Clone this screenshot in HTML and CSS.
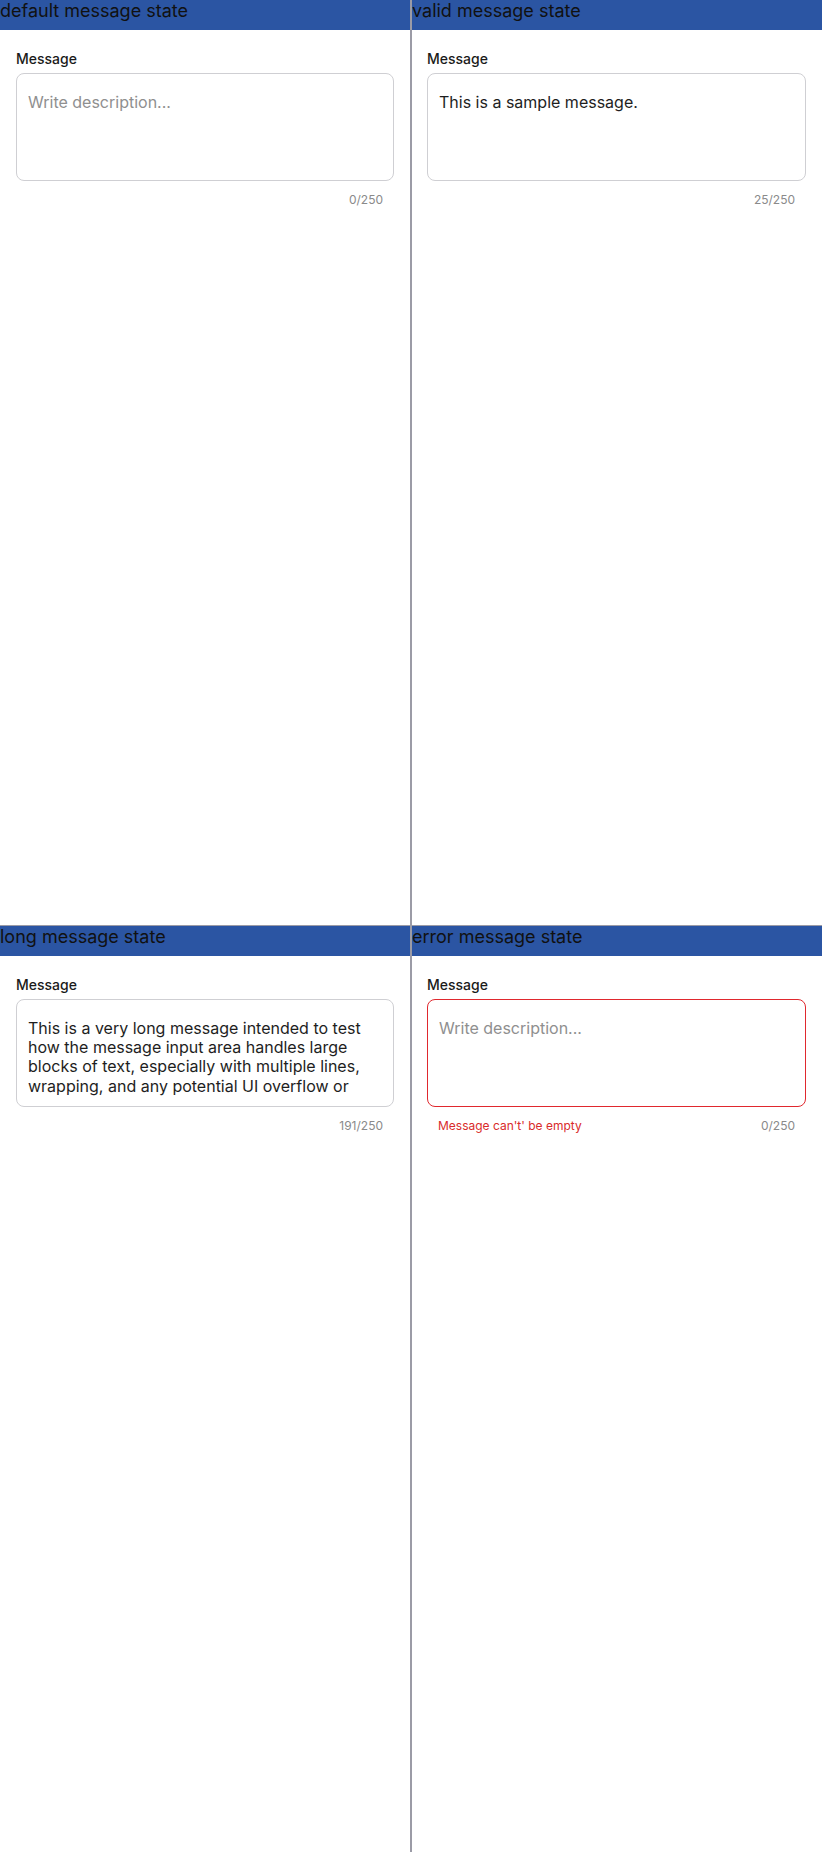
FILE: index.html
```html
<!DOCTYPE html>
<html lang="en">
<head>
<meta charset="utf-8">
<title>Message field states</title>
<link rel="stylesheet" href="styles.css">
</head>
<body>
<main class="grid">
  <section class="cell cell-left cell-top">
    <div class="cell-title">default message state</div>
    <div class="cell-body">
      <div class="field">
        <label class="field-label" for="m1">Message</label>
        <div class="field-box">
          <textarea id="m1" class="field-input" placeholder="Write description..."></textarea>
        </div>
        <div class="field-meta">
          <span class="field-count">0/250</span>
        </div>
      </div>
    </div>
  </section>

  <section class="cell cell-right cell-top">
    <div class="cell-title">valid message state</div>
    <div class="cell-body">
      <div class="field">
        <label class="field-label" for="m2">Message</label>
        <div class="field-box">
          <textarea id="m2" class="field-input" placeholder="Write description...">This is a sample message.</textarea>
        </div>
        <div class="field-meta">
          <span class="field-count">25/250</span>
        </div>
      </div>
    </div>
  </section>

  <section class="cell cell-left">
    <div class="cell-title">long message state</div>
    <div class="cell-body">
      <div class="field">
        <label class="field-label" for="m3">Message</label>
        <div class="field-box">
          <textarea id="m3" class="field-input" placeholder="Write description...">This is a very long message intended to test how the message input area handles large blocks of text, especially with multiple lines, wrapping, and any potential UI overflow or layout issues.</textarea>
        </div>
        <div class="field-meta">
          <span class="field-count">191/250</span>
        </div>
      </div>
    </div>
  </section>

  <section class="cell cell-right">
    <div class="cell-title">error message state</div>
    <div class="cell-body">
      <div class="field field-invalid">
        <label class="field-label" for="m4">Message</label>
        <div class="field-box">
          <textarea id="m4" class="field-input" placeholder="Write description..."></textarea>
        </div>
        <div class="field-meta">
          <span class="field-error">Message can't' be empty</span>
          <span class="field-count">0/250</span>
        </div>
      </div>
    </div>
  </section>
</main>
</body>
</html>
```

FILE: styles.css
```css
* {
  box-sizing: border-box;
}

html, body {
  margin: 0;
  padding: 0;
  background: #ffffff;
}

body {
  font-family: Inter, "Noto Sans", "Liberation Sans", sans-serif;
  color: #1c1c1c;
}

.grid {
  display: grid;
  grid-template-columns: 1fr 1fr;
  grid-template-rows: 926px 926px;
  width: 822px;
  height: 1852px;
}

.cell {
  display: flex;
  flex-direction: column;
  min-width: 0;
  background: #ffffff;
  border-color: #9b9ba6;
  border-style: solid;
  border-width: 0;
}

.cell-left {
  border-right-width: 1px;
}

.cell-right {
  border-left-width: 1px;
}

.cell-top {
  border-bottom-width: 1px;
}

.cell-title {
  height: 30px;
  background: #2b55a3;
  color: #111111;
  font-size: 18px;
  line-height: 21px;
  white-space: nowrap;
}

.cell-body {
  padding: 20px 16px 0 16px;
}

.cell-right .cell-body {
  padding-left: 15px;
  padding-right: 16px;
}

.field {
  display: flex;
  flex-direction: column;
}

.field-label {
  font-size: 14px;
  font-weight: 500;
  line-height: 17px;
  color: #1a1a1a;
  margin-bottom: 6px;
}

.field-box {
  height: 108px;
  border: 1px solid #cfcfd3;
  border-radius: 8px;
  padding: 19px 11px 0 11px;
  background: #ffffff;
}

.field-input {
  display: block;
  width: 100%;
  height: 77px;
  margin: 0;
  padding: 0;
  border: none;
  outline: none;
  resize: none;
  overflow: hidden;
  background: transparent;
  font-family: inherit;
  font-size: 16px;
  line-height: 19.2px;
  color: #1e1e1e;
}

.field-input::placeholder {
  color: #8f8f8f;
  opacity: 1;
}

.field-meta {
  display: flex;
  justify-content: flex-end;
  align-items: baseline;
  gap: 12px;
  padding: 0 11px;
  margin-top: 11px;
  font-size: 12px;
  line-height: 15px;
}

.field-count {
  color: #8a8a8a;
}

.field-error {
  color: #d92b2b;
  margin-right: auto;
}

.field-invalid .field-box {
  border-color: #e0282e;
}
```
